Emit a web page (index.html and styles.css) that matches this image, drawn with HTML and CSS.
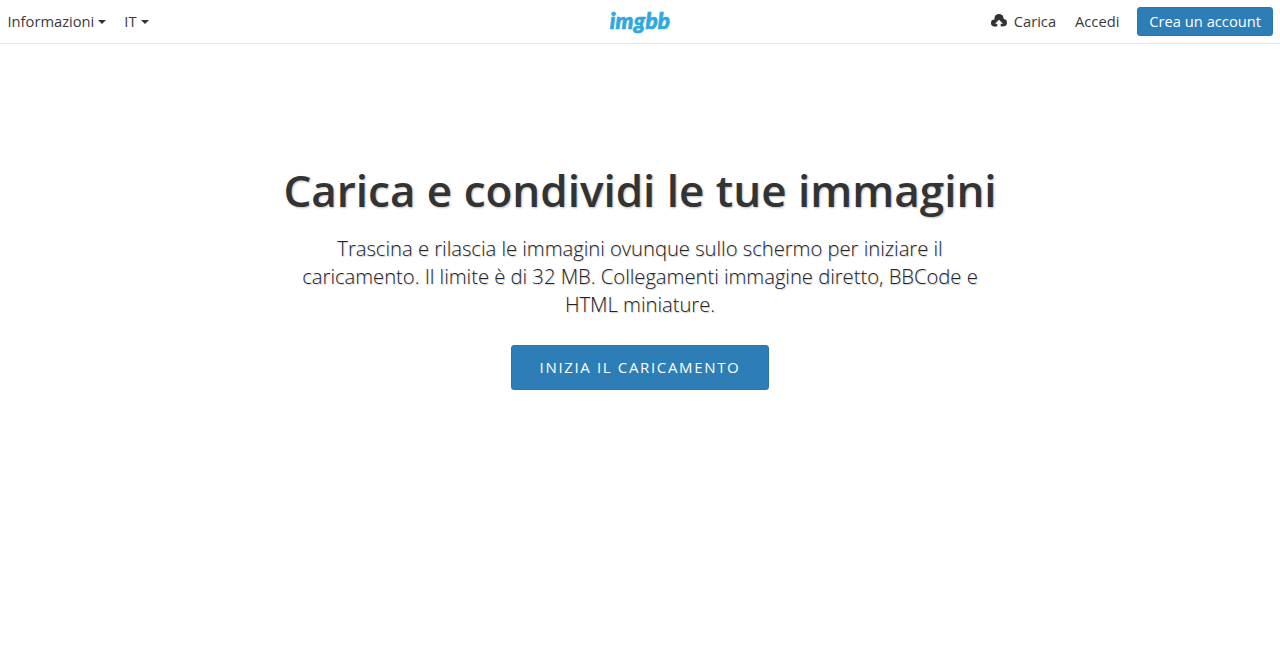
FILE: index.html
```html
<!DOCTYPE html>
<html lang="it">
<head>
<meta charset="utf-8">
<title>imgbb</title>
<link rel="stylesheet" href="styles.css">
</head>
<body>
<header class="topbar">
  <nav class="nav nav-left">
    <a class="nav-item" href="#"><span>Informazioni</span><span class="caret"></span></a>
    <a class="nav-item" href="#"><span>IT</span><span class="caret"></span></a>
  </nav>
  <a class="logo" href="#">imgbb</a>
  <nav class="nav nav-right">
    <a class="nav-item nav-upload" href="#">
      <svg class="cloud" viewBox="0 0 16 13" width="16" height="13" aria-hidden="true">
        <circle cx="3.4" cy="9" r="3.4" fill="#333"/>
        <circle cx="8" cy="4.600" r="4.600" fill="#333"/>
        <circle cx="12.400" cy="8.700" r="3.600" fill="#333"/>
        <rect x="3.400" y="6" width="9" height="6.400" fill="#333"/>
        <path fill="#fff" d="M8 5.800 12 9.800H9.700V13H6.300V9.800H4Z"/>
      </svg>
      <span>Carica</span>
    </a>
    <a class="nav-item" href="#">Accedi</a>
    <a class="btn-account" href="#">Crea un account</a>
  </nav>
</header>
<main class="hero">
  <h1 class="hero-title">Carica e condividi le tue immagini</h1>
  <p class="hero-text">Trascina e rilascia le immagini ovunque sullo schermo per iniziare il caricamento. Il limite è di 32 MB. Collegamenti immagine diretto, BBCode e HTML miniature.</p>
  <a class="btn-start" href="#">INIZIA IL CARICAMENTO</a>
</main>
</body>
</html>
```
FILE: styles.css
```css
* { box-sizing: border-box; }
html, body { height: 100%; }
body {
  margin: 0;
  background: #fff;
  color: #333;
  font-family: "Open Sans", sans-serif;
  overflow: hidden;
}
a { color: inherit; text-decoration: none; }
.topbar {
  display: flex;
  align-items: center;
  justify-content: space-between;
  height: 44px;
  padding: 0 7px 0 7.5px;
  border-bottom: 1px solid #e5e5e5;
  position: relative;
}
.nav { display: flex; align-items: center; }
.nav-left { gap: 18px; }
.nav-right { gap: 18px; }
.nav-upload { margin-right: 1px; }
.nav-item {
  font-size: 14.7px;
  line-height: 20px;
  color: #3a3a3a;
  display: flex;
  align-items: center;
  padding-bottom: 2px;
}
.caret {
  display: inline-block;
  width: 0;
  height: 0;
  margin-left: 4px;
  margin-top: 2px;
  border-top: 4px solid #333;
  border-left: 4px solid transparent;
  border-right: 4px solid transparent;
}
.cloud { margin-right: 7px; flex: none; }
.logo {
  position: absolute;
  left: 0;
  right: 0;
  top: 8px;
  text-align: center;
  font-family: "Lato", sans-serif;
  font-weight: 900;
  font-style: italic;
  font-size: 22.5px;
  line-height: 26px;
  letter-spacing: 0.2px;
  -webkit-text-stroke: 0.7px #2ea9e0;
  color: #2ea9e0;
  pointer-events: none;
}
.btn-account {
  display: block;
  height: 29px;
  line-height: 26px;
  padding: 0 11px;
  font-size: 14.7px;
  color: #fff;
  background: #2d7eb7;
  border: 1px solid #2a78b0;
  border-radius: 3px;
}
.hero {
  display: flex;
  flex-direction: column;
  align-items: center;
  padding-top: 115px;
  text-align: center;
}
.hero-title {
  margin: 0;
  font-size: 44px;
  line-height: 62px;
  font-weight: 600;
  color: #333;
  text-shadow: 1px 1px 2px rgba(0,0,0,.25);
}
.hero-text {
  margin: 13px 0 0;
  width: 700px;
  font-size: 20.2px;
  line-height: 28px;
  font-weight: 300;
  color: #222;
  text-shadow: 1px 1px 1px rgba(0,0,0,.2);
}
.btn-start {
  display: block;
  margin-top: 27px;
  width: 258px;
  height: 45px;
  line-height: 43px;
  font-size: 15px;
  letter-spacing: 1.65px;
  color: #fff;
  background: #2d7eb7;
  border: 1px solid #2a78b0;
  border-radius: 3px;
}
```
